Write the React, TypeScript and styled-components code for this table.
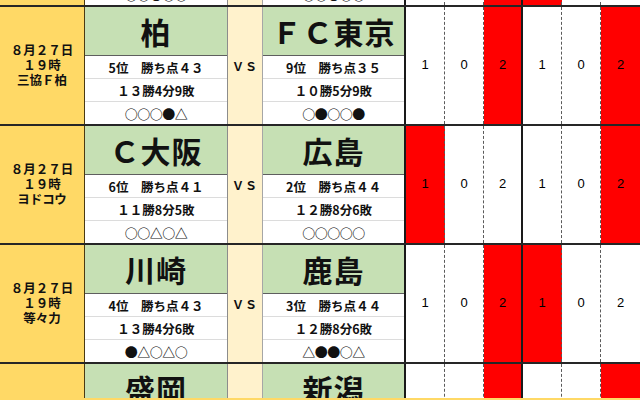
import * as React from 'react';
import styled, { createGlobalStyle } from 'styled-components';

interface ITeam {
  name: string;
  rank: string;
  record: string;
  form: string;
}

interface IMatch {
  date: string;
  time: string;
  venue: string;
  home: ITeam;
  away: ITeam;
  scores: string[];
  red: number[];
}

const GlobalStyle = createGlobalStyle`
  html, body {
    margin: 0;
    padding: 0;
    background: #fff;
  }
  body {
    font-family: "Noto Sans CJK JP", "Noto Sans", sans-serif;
    color: #111;
  }
`;

const Screen = styled.div`
  width: 640px;
  height: 400px;
  display: flex;
  flex-direction: column;
  overflow: hidden;
`;

const Viewport = styled.div`
  flex: 1;
  overflow: hidden;
`;

// the sheet is scrolled: only the bottom strip of the first row shows
const Sheet = styled.div`
  margin-top: -112px;
`;

const FrozenEdge = styled.div`
  height: 2px;
  background: #ffd966;
`;

const Row = styled.div`
  display: grid;
  grid-template-columns: 85px 143px 35px 143px repeat(6, 39px);
  height: 119px;
  box-sizing: border-box;
  border-bottom: 2px solid #262626;
`;

const DateCell = styled.div`
  background: #ffd966;
  border-right: 1px solid #4b3a12;
  display: flex;
  flex-direction: column;
  align-items: center;
  justify-content: center;
  font-size: 12.5px;
  font-weight: 700;
  line-height: 15px;
  padding-bottom: 2px;
`;

const TeamCell = styled.div<{ $edge?: boolean }>`
  display: flex;
  flex-direction: column;
  box-sizing: border-box;
  border-right: ${({ $edge }) => ($edge ? '2px solid #1a1a1a' : '1px solid #8c8c8c')};
`;

const TeamName = styled.div`
  height: 49px;
  box-sizing: border-box;
  background: #c6e0b4;
  border-bottom: 1px solid #5e5e5e;
  display: flex;
  align-items: center;
  justify-content: center;
  font-size: 30px;
  font-weight: 700;
  letter-spacing: 1px;
  line-height: 1;
  padding-bottom: 1px;
`;

const StatLine = styled.div<{ $last?: boolean }>`
  flex: 1;
  display: flex;
  align-items: center;
  justify-content: center;
  font-size: 12.5px;
  font-weight: 700;
  white-space: pre;
  border-bottom: ${({ $last }) => ($last ? 'none' : '1px solid #dcdcdc')};
`;

const FormLine = styled(StatLine)`
  font-size: 13px;
  letter-spacing: -0.5px;
`;

const VsCell = styled.div`
  background: #fff2cc;
  border-right: 1px solid #a6a6a6;
  display: flex;
  align-items: center;
  justify-content: center;
  font-size: 12px;
  font-weight: 700;
  letter-spacing: 1px;
`;

const ScoreCell = styled.div<{ $red: boolean; $line: 'dash' | 'solid' | 'none' }>`
  background: ${({ $red }) => ($red ? '#ff0000' : '#fff')};
  border-right: ${({ $line }) =>
    $line === 'dash' ? '1px dashed #5a5a5a' : $line === 'solid' ? '2px solid #1a1a1a' : 'none'};
  display: flex;
  align-items: center;
  justify-content: center;
  font-family: "Liberation Sans", Arial, sans-serif;
  font-size: 13px;
  color: #000;
  padding-bottom: 2px;
`;

const matches: IMatch[] = [
  {
    date: '８月２６日',
    time: '１９時',
    venue: '味スタ',
    home: { name: '浦和', rank: '8位　勝ち点３６', record: '１０勝6分9敗', form: '○○●○○' },
    away: { name: '鳥栖', rank: '7位　勝ち点３７', record: '１１勝4分8敗', form: '○○●○○' },
    scores: ['1', '0', '2', '1', '0', '2'],
    red: [2, 3],
  },
  {
    date: '８月２７日',
    time: '１９時',
    venue: '三協Ｆ柏',
    home: { name: '柏', rank: '5位　勝ち点４３', record: '１３勝4分9敗', form: '○○○●△' },
    away: { name: 'ＦＣ東京', rank: '9位　勝ち点３５', record: '１０勝5分9敗', form: '○●○○●' },
    scores: ['1', '0', '2', '1', '0', '2'],
    red: [2, 5],
  },
  {
    date: '８月２７日',
    time: '１９時',
    venue: 'ヨドコウ',
    home: { name: 'Ｃ大阪', rank: '6位　勝ち点４１', record: '１１勝8分5敗', form: '○○△○△' },
    away: { name: '広島', rank: '2位　勝ち点４４', record: '１２勝8分6敗', form: '○○○○○' },
    scores: ['1', '0', '2', '1', '0', '2'],
    red: [0, 5],
  },
  {
    date: '８月２７日',
    time: '１９時',
    venue: '等々力',
    home: { name: '川崎', rank: '4位　勝ち点４３', record: '１３勝4分6敗', form: '●△○△○' },
    away: { name: '鹿島', rank: '3位　勝ち点４４', record: '１２勝8分6敗', form: '△●●○△' },
    scores: ['1', '0', '2', '1', '0', '2'],
    red: [2, 3],
  },
  {
    date: '８月２７日',
    time: '１９時',
    venue: 'ニッパツ',
    home: { name: '盛岡', rank: '10位　勝ち点３４', record: '９勝7分8敗', form: '○△●○●' },
    away: { name: '新潟', rank: '11位　勝ち点３３', record: '９勝6分9敗', form: '●○△○△' },
    scores: ['1', '0', '2', '1', '0', '2'],
    red: [2, 5],
  },
];

const lineAfter = (i: number): 'dash' | 'solid' | 'none' => {
  if (i === 2) return 'solid';
  if (i === 5) return 'none';
  return 'dash';
};

const Team: React.FC<{ team: ITeam; edge?: boolean }> = ({ team, edge }) => (
  <TeamCell $edge={edge}>
    <TeamName>{team.name}</TeamName>
    <StatLine>{team.rank}</StatLine>
    <StatLine>{team.record}</StatLine>
    <FormLine $last>{team.form}</FormLine>
  </TeamCell>
);

const App: React.FC = () => (
  <Screen>
    <GlobalStyle />
    <Viewport>
      <Sheet>
        {matches.map((m, idx) => (
          <Row key={idx}>
            <DateCell>
              <div>{m.date}</div>
              <div>{m.time}</div>
              <div>{m.venue}</div>
            </DateCell>
            <Team team={m.home} />
            <VsCell>ＶＳ</VsCell>
            <Team team={m.away} edge />
            {m.scores.map((s, i) => (
              <ScoreCell key={i} $red={m.red.includes(i)} $line={lineAfter(i)}>
                {s}
              </ScoreCell>
            ))}
          </Row>
        ))}
      </Sheet>
    </Viewport>
    <FrozenEdge />
  </Screen>
);

export default App;
